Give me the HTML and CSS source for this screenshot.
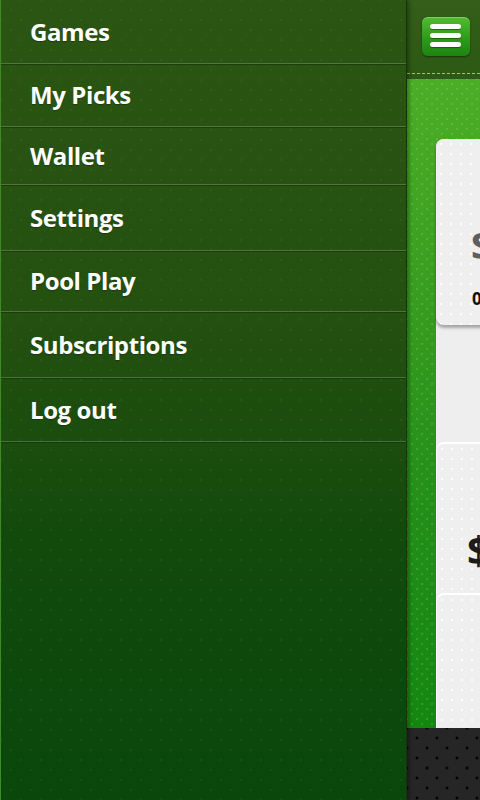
FILE: index.html
```html
<!DOCTYPE html>
<html>
<head>
<meta charset="utf-8">
<link rel="stylesheet" href="styles.css">
</head>
<body>
<div class="screen">
  <nav class="drawer">
    <ul class="menu">
      <li class="item">Games</li>
      <li class="item">My Picks</li>
      <li class="item">Wallet</li>
      <li class="item">Settings</li>
      <li class="item">Pool Play</li>
      <li class="item">Subscriptions</li>
      <li class="item">Log out</li>
    </ul>
  </nav>
  <main class="content">
    <header class="topbar">
      <button class="menu-btn" aria-label="Menu">
        <span class="bar"></span><span class="bar"></span><span class="bar"></span>
      </button>
    </header>
    <section class="field">
      <div class="panel">
        <div class="card card-first">
          <div class="amount amount-gray">$</div>
          <div class="small">0</div>
        </div>
        <div class="spacer"></div>
        <div class="card card-second">
          <div class="amount amount-dark">$</div>
        </div>
        <div class="card card-third"></div>
      </div>
    </section>
    <footer class="bottombar"></footer>
  </main>
</div>
</body>
</html>
```
FILE: styles.css
```css
* { box-sizing: border-box; }
html, body { margin: 0; padding: 0; }
body {
  width: 480px;
  height: 800px;
  overflow: hidden;
  font-family: "Open Sans", "Liberation Sans", sans-serif;
  background: #111;
}
.screen {
  display: flex;
  width: 480px;
  height: 800px;
}
.drawer {
  width: 407px;
  flex: none;
  height: 800px;
  background-color: #1d4a0e;
  background-image:
    radial-gradient(circle, rgba(120,170,90,0.10) 1px, transparent 1.6px),
    radial-gradient(circle, rgba(120,170,90,0.10) 1px, transparent 1.6px),
    linear-gradient(180deg, #2b5512 0%, #245010 40%, #124a0c 68%, #09470b 100%);
  background-size: 20px 20px, 20px 20px, 100% 100%;
  background-position: 0 0, 10px 10px, 0 0;
  border-left: 1px solid #3f8a25;
  border-right: 1px solid #163309;
  position: relative;
  z-index: 2;
  box-shadow: 2px 0 4px rgba(0,0,0,0.35);
}
.menu {
  list-style: none;
  margin: 0;
  padding: 0;
}
.item {
  height: 63px;
  display: flex;
  align-items: center;
  padding-left: 29px;
  padding-bottom: 1px;
  color: #ffffff;
  font-weight: 700;
  font-size: 24px;
  letter-spacing: -0.4px;
  border-bottom: 1px solid rgba(150,175,130,0.38);
  box-shadow: 0 1px 0 rgba(0,0,0,0.25);
  text-shadow: 0 1px 1px rgba(0,0,0,0.3);
}
.item:nth-child(1) { height: 64px; }
.item:nth-child(2) { height: 63px; }
.item:nth-child(3) { height: 58px; }
.item:nth-child(4) { height: 66px; }
.item:nth-child(5) { height: 61px; }
.item:nth-child(6) { height: 66px; }
.item:nth-child(7) { height: 64px; }

.content {
  flex: 1;
  display: flex;
  flex-direction: column;
  min-width: 0;
}
.topbar {
  height: 79px;
  flex: none;
  background: linear-gradient(180deg, #345e19 0%, #2d5914 100%);
  padding: 17px 0 0 15px;
  position: relative;
}
.topbar::after {
  content: "";
  position: absolute;
  left: 0; right: 0;
  top: 73px;
  border-top: 1px dashed #a9b8a0;
}
.menu-btn {
  width: 48px;
  height: 39px;
  border: none;
  border-radius: 6px;
  background: linear-gradient(180deg, #52bd30 0%, #2f9a19 55%, #1b8510 100%);
  box-shadow: 0 1px 2px rgba(0,0,0,0.45), inset 0 1px 0 rgba(255,255,255,0.25);
  padding: 7px 0 0 8px;
  display: flex;
  flex-direction: column;
  gap: 4px;
  align-items: flex-start;
}
.bar {
  display: block;
  width: 31px;
  height: 5px;
  border-radius: 3px;
  background: #ffffff;
  box-shadow: 0 1px 1px rgba(0,0,0,0.4);
}
.field {
  flex: 1;
  background-color: #2a9a1a;
  background-image:
    radial-gradient(circle, rgba(180,240,150,0.18) 1px, transparent 1.6px),
    radial-gradient(circle, rgba(180,240,150,0.18) 1px, transparent 1.6px),
    linear-gradient(180deg, #4cae27 0%, #3a9f20 30%, #26901a 60%, #138710 100%);
  background-size: 10px 10px, 10px 10px, 100% 100%;
  background-position: 0 0, 5px 5px, 0 0;
  padding: 60px 0 0 29px;
  display: flex;
}
.panel {
  flex: 1;
  background: #eeeeee;
  border-radius: 8px 0 0 0;
  display: flex;
  flex-direction: column;
}
.card {
  background-color: #efefef;
  background-image: radial-gradient(circle, rgba(255,255,255,0.9) 1px, transparent 1.6px);
  background-size: 10px 10px;
  border-radius: 8px 0 0 8px;
  position: relative;
}
.card-first {
  height: 186px;
  box-shadow: 0 3px 3px rgba(0,0,0,0.3);
  padding: 86px 0 0 35px;
}
.spacer { height: 117px; }
.card-second {
  height: 151px;
  border-top: 2px solid #ffffff;
  border-left: 1px solid #fafafa;
  border-radius: 8px 0 0 0;
  padding: 86px 0 0 30px;
}
.card-third {
  flex: 1;
  border-top: 2px solid #ffffff;
  border-left: 1px solid #fafafa;
  border-radius: 8px 0 0 0;
}
.amount {
  font-size: 40px;
  font-weight: 700;
  line-height: 40px;
}
.amount-gray { color: #5f5f5f; }
.amount-dark { color: #1c1c1c; }
.small {
  font-size: 17px;
  font-weight: 700;
  color: #111;
  line-height: 20px;
  margin-top: 24px;
  margin-left: 1px;
}
.bottombar {
  height: 72px;
  flex: none;
  background-color: #262626;
  background-image:
    radial-gradient(circle, #050505 1.2px, transparent 1.8px),
    radial-gradient(circle, #050505 1.2px, transparent 1.8px);
  background-size: 20px 20px, 20px 20px;
  background-position: 0 0, 10px 10px;
}
```
